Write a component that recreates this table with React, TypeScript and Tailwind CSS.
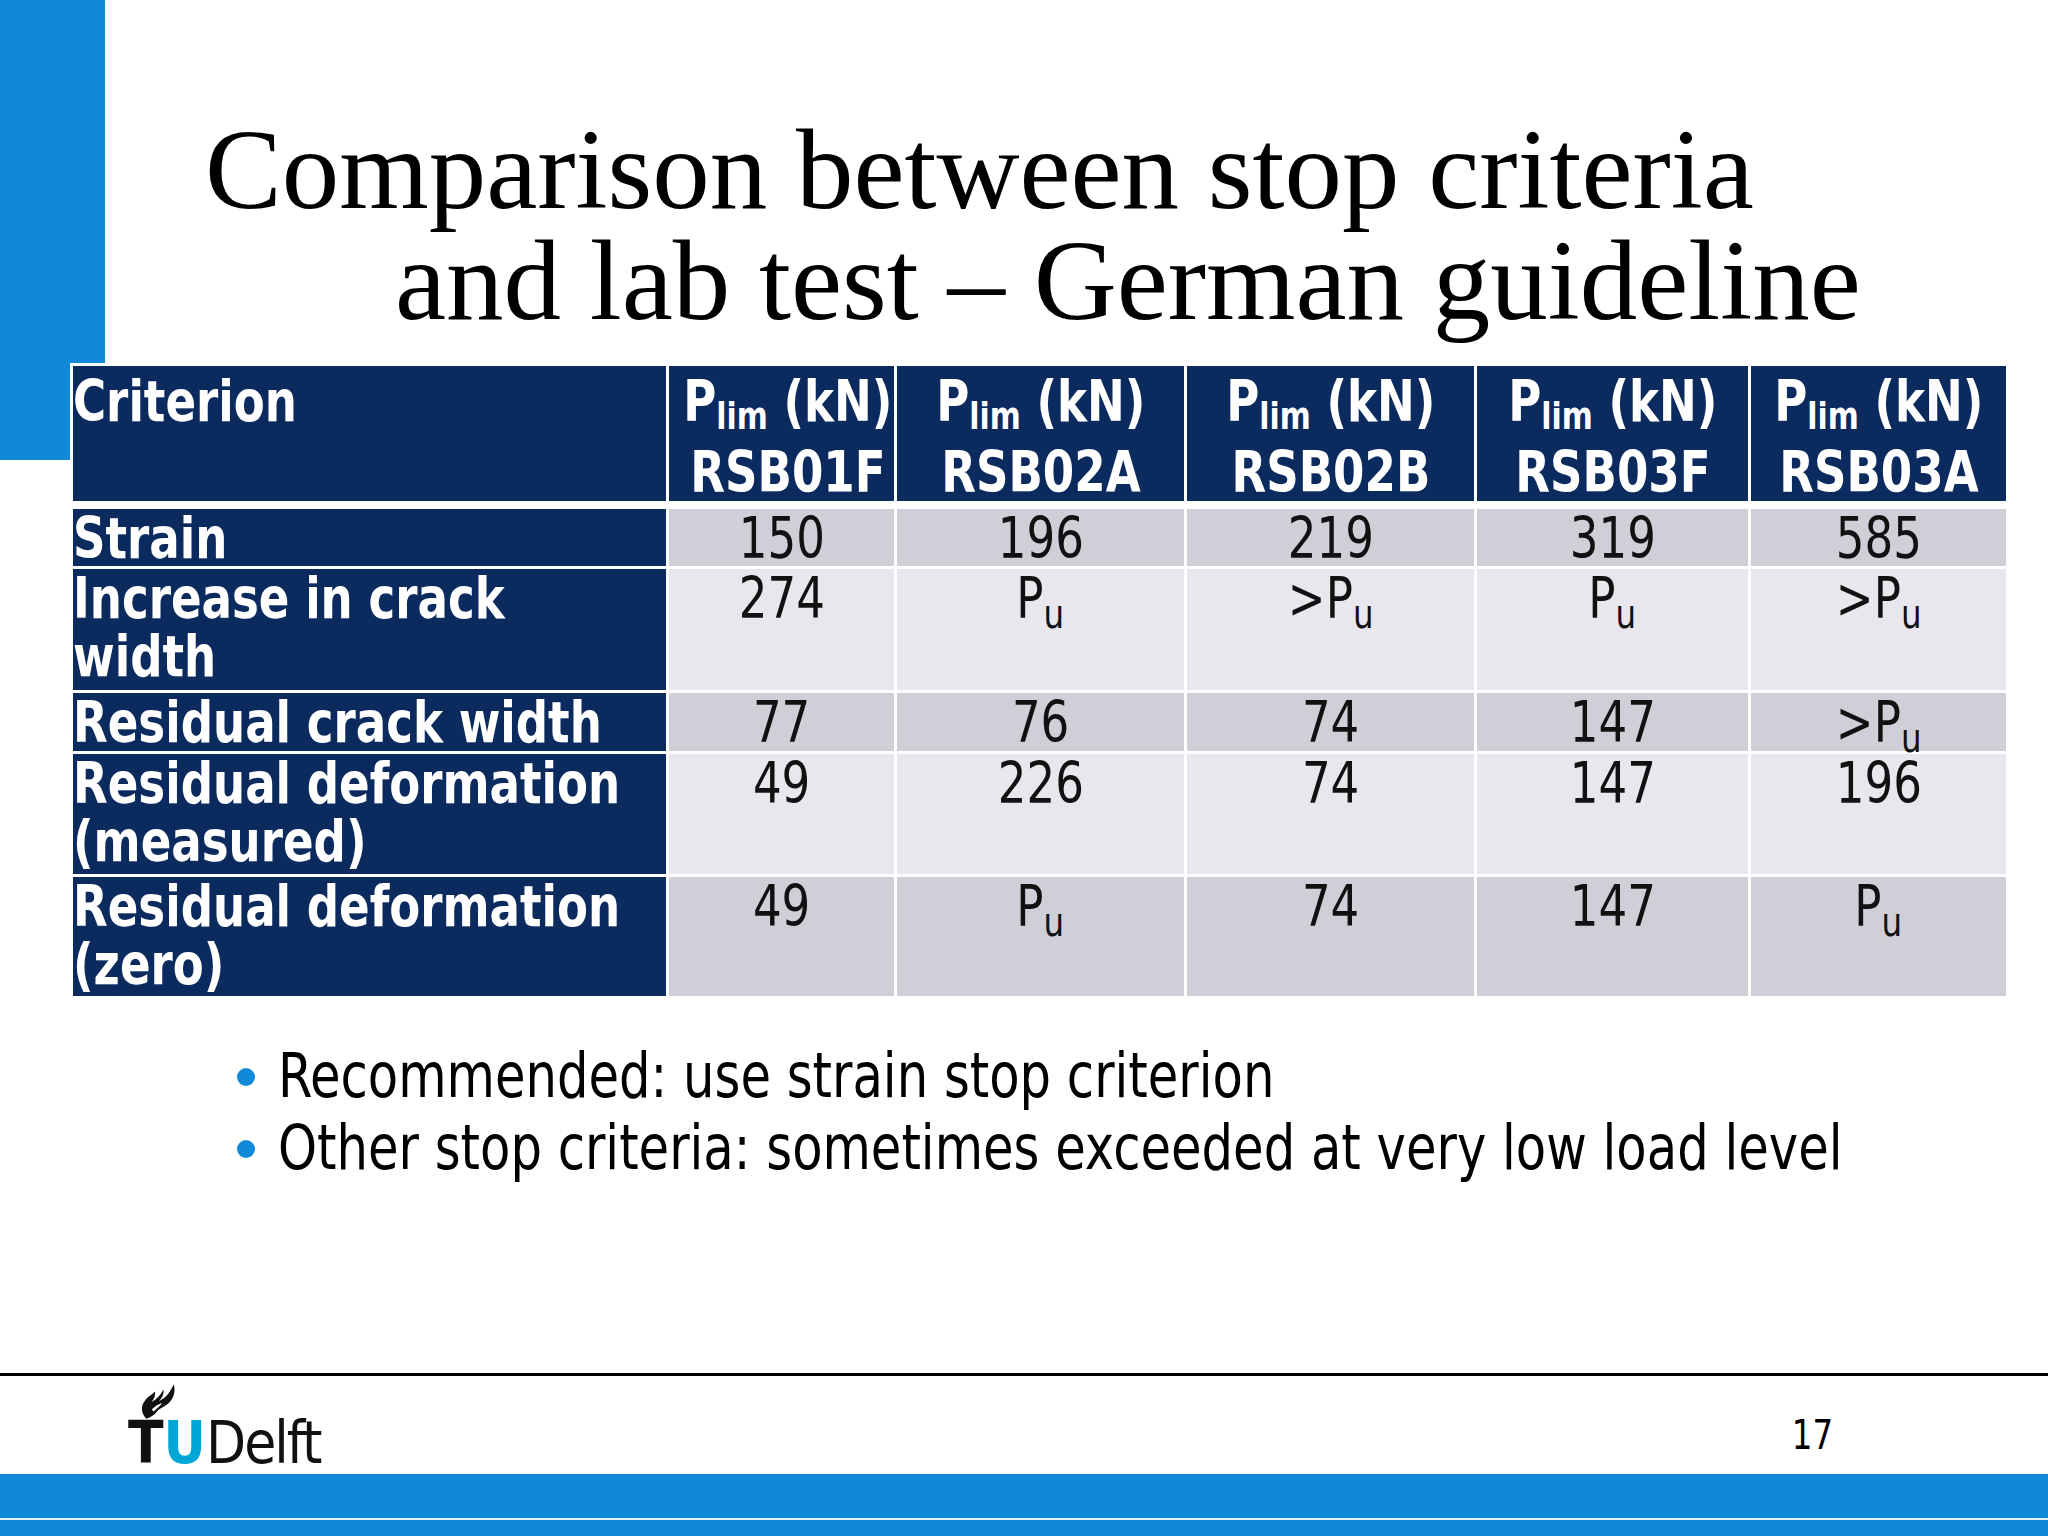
import type { ReactNode } from "react";
import clsx from "clsx";

type Row = {
  label: string[];
  vals: string[];
  dark: boolean;
  h: string;
};

const rows: Row[] = [
  { label: ["Strain"], vals: ["150", "196", "219", "319", "585"], dark: true, h: "grid-rows-[57px]" },
  { label: ["Increase in crack", "width"], vals: ["274", "Pu", ">Pu", "Pu", ">Pu"], dark: false, h: "grid-rows-[121px]" },
  { label: ["Residual crack width"], vals: ["77", "76", "74", "147", ">Pu"], dark: true, h: "grid-rows-[58px]" },
  { label: ["Residual deformation", "(measured)"], vals: ["49", "226", "74", "147", "196"], dark: false, h: "grid-rows-[120px]" },
  { label: ["Residual deformation", "(zero)"], vals: ["49", "Pu", "74", "147", "Pu"], dark: true, h: "grid-rows-[119px]" },
];

const specimens = ["RSB01F", "RSB02A", "RSB02B", "RSB03F", "RSB03A"];

const cols = "grid grid-cols-[593px_225px_287px_287px_271px_255px] gap-x-[3px]";

// squeezed text, the slide font is narrower than anything installed
function Sq({ children, className }: { children: ReactNode; className?: string }) {
  return (
    <span className={clsx("inline-block whitespace-nowrap align-top scale-x-[0.88]", className)}>
      {children}
    </span>
  );
}

function Value({ v }: { v: string }) {
  if (v === "Pu" || v === ">Pu") {
    return (
      <>
        {v === ">Pu" ? ">" : ""}P
        <span className="relative top-[0.24em] text-[0.72em] leading-none">u</span>
      </>
    );
  }
  return <>{v}</>;
}

function Flame() {
  return (
    <svg viewBox="0 0 40 36" className="ml-[9px] h-[38px] w-[42px]">
      <path
        d="M9 35 C4 30 3 23 8 17 C11 13 15 12 17 9 C18 13 16 16 14 19 C19 16 23 12 25 7 C26 11 24 15 21 18 C26 16 31 11 35 2 C37 9 35 16 29 21 C25 24 21 25 19 28 C17 31 14 33 9 35 Z"
        fill="#111"
      />
      <path d="M14 26 C17 23 21 21 24 20 C22 23 19 25 16 28 Z" fill="#fff" />
    </svg>
  );
}

export default function App() {
  return (
    <div className="relative flex h-[1536px] w-[2048px] flex-col overflow-hidden bg-white font-['DejaVu_Sans_Condensed','DejaVu_Sans',sans-serif] font-stretch-condensed text-[#111]">
      <div className="absolute left-0 top-0 h-[460px] w-[105px] bg-[#1289d8]" />

      <h1 className="relative pt-[114px] font-['Liberation_Serif',serif] text-[115px] font-normal leading-[111px] text-black">
        <span className="block pl-[205px]">Comparison between stop criteria</span>
        <span className="block pl-[395px]">and lab test – German guideline</span>
      </h1>

      <div className="relative ml-[70px] mt-[27px] flex w-fit flex-col gap-y-[3px] bg-white p-[3px] text-[57px] leading-[58px]">
        <div className={clsx(cols, "mb-[5px] grid-rows-[135px] font-bold leading-[71px] text-white")}>
          <div className="bg-[#0b2b5f]">
            <Sq className="origin-left">Criterion</Sq>
          </div>
          {specimens.map((s) => (
            <div key={s} className="bg-[#0b2b5f] text-center">
              <Sq className="text-center">
                <span className="block">
                  P<span className="relative top-[0.2em] text-[0.66em] leading-none">lim</span> (kN)
                </span>
                <span className="block h-[64px]">{s}</span>
              </Sq>
            </div>
          ))}
        </div>

        {rows.map((r) => (
          <div key={r.label.join(" ")} className={clsx(cols, r.h)}>
            <div className="bg-[#0b2b5f] font-bold text-white">
              <Sq className="origin-left">
                {r.label.map((l, i) => (
                  <span key={l}>
                    {i > 0 && <br />}
                    {l}
                  </span>
                ))}
              </Sq>
            </div>
            {r.vals.map((v, i) => (
              <div
                key={i}
                className={clsx("text-center", r.dark ? "bg-[#cecfd7]" : "bg-[#e7e7ed]")}
              >
                <Sq>
                  <Value v={v} />
                </Sq>
              </div>
            ))}
          </div>
        ))}
      </div>

      <ul className="relative mt-[41px] text-[62px] leading-[72px] text-black">
        {[
          "Recommended: use strain stop criterion",
          "Other stop criteria: sometimes exceeded at very low load level",
        ].map((t) => (
          <li key={t} className="flex items-start">
            <span className="ml-[237px] mt-[28px] h-[18px] w-[18px] shrink-0 rounded-full bg-[#1289d8]" />
            <Sq className="ml-[23px] origin-left scale-x-[0.89]">{t}</Sq>
          </li>
        ))}
      </ul>

      <footer className="mt-auto border-t-[3px] border-black">
        <div className="flex h-[98px] items-start justify-between pl-[128px] pr-[212px]">
          <div className="flex flex-col pt-[6px]">
            <Flame />
            <div className="-mt-[6px] flex text-[58px] leading-[58px]">
              <span className="font-bold text-[#111]">T</span>
              <span className="font-bold text-[#00a6d6]">U</span>
              <span className="tracking-[-2px]">Delft</span>
            </div>
          </div>
          <div className="pt-[39px] text-[41px] leading-[41px] text-black">
            <Sq>17</Sq>
          </div>
        </div>
        <div className="h-[44px] bg-[#1289d8]" />
        <div className="h-[2px] bg-[#e8f4fc]" />
        <div className="h-[16px] bg-[#1289d8]" />
      </footer>
    </div>
  );
}
